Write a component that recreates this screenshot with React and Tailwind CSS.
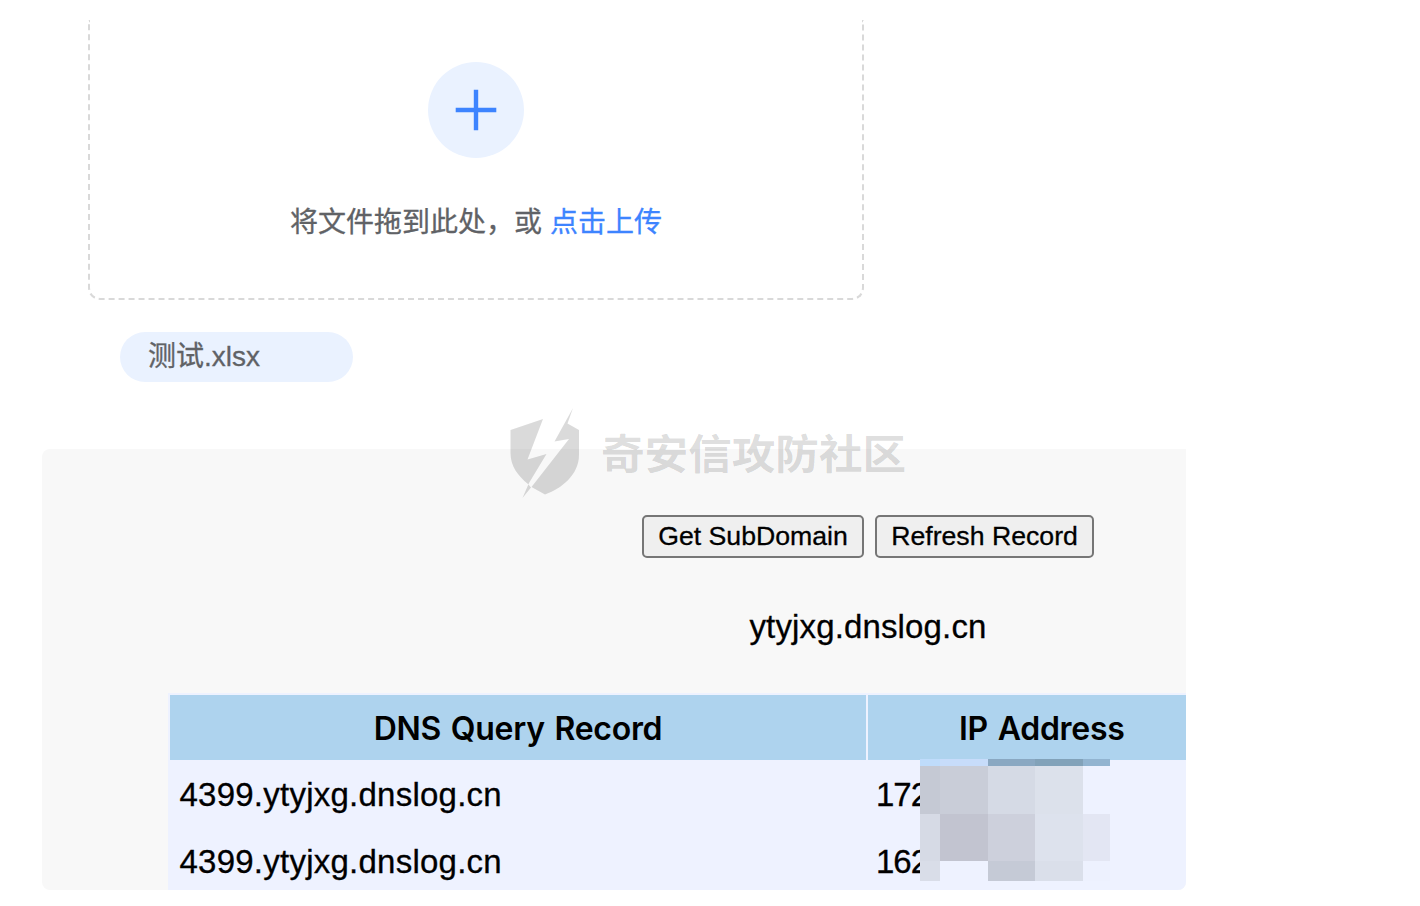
function UploadPanel() {
  return (
    <section className="ml-[88px] flex h-[280px] w-[776px] flex-col items-center rounded-b-xl border-2 border-t-0 border-dashed border-[#d9d9d9] pt-[42px]">
      <div className="flex size-24 shrink-0 items-center justify-center rounded-full bg-[#eaf2ff]">
        <svg viewBox="0 0 42 42" className="size-[42px]" fill="none" stroke="#3d84ff" strokeWidth="4.4">
          <path d="M21 .7v40.6M.7 21h40.6" />
        </svg>
      </div>
      <p className="mt-11 flex gap-2 whitespace-nowrap text-[28px] leading-[42px] text-[#606266] [-webkit-text-stroke:0.3px]">
        <span>将文件拖到此处，或</span>
        <a className="text-[#3d84ff]">点击上传</a>
      </p>
    </section>
  );
}

function Watermark() {
  return (
    <div className="pointer-events-none absolute left-[510px] top-[407px] flex h-[92px] items-center text-black/[0.145]">
      <svg viewBox="0 0 70 92" className="h-[92px] w-[70px]" fill="currentColor">
        <path d="M.5 23 33 12 17.5 52.500 36.500 47 19 76 12.500 91 21 80.500 18 77C8 69 .5 59 .5 46Z" />
        <path d="M63 1 44.500 34.500 59 32 21.500 80 35 87.500C51 82 69 68 69 48V23L57.500 16.500Z" />
      </svg>
      <span className="ml-[21px] scale-y-[0.94] whitespace-nowrap pt-[5px] text-[43.600px] font-bold leading-none">奇安信攻防社区</span>
    </div>
  );
}

function RecordButton({ children, className }) {
  return (
    <button className={`h-[43px] whitespace-nowrap rounded-[5px] border-2 border-[#767676] bg-[#efefef] font-['Liberation_Sans',sans-serif] text-[26.670px] leading-none [-webkit-text-stroke:0.3px] ${className}`}>
      {children}
    </button>
  );
}

function Redaction() {
  return (
    <svg viewBox="0 0 190 122" className="absolute left-[752px] top-[66px] h-[122px] w-[190px]" shapeRendering="crispEdges">
      <path fill="#bfdcfb" d="M0 0h20v7H0z" />
      <path fill="#c7dcfa" d="M20 0h48v7H20z" />
      <path fill="#8aa8c2" d="M68 0h47v7H68z" />
      <path fill="#82a2b9" d="M115 0h48v7h-48z" />
      <path fill="#92b4d0" d="M163 0h27v7h-27z" />
      <path fill="#c5c9d4" d="M0 7h20v48H0z" />
      <path fill="#c9cdd8" d="M20 7h48v48H20z" />
      <path fill="#d5dae5" d="M68 7h47v48H68z" />
      <path fill="#dce1eb" d="M115 7h48v48h-48z" />
      <path fill="#d6dae5" d="M0 55h20v47H0z" />
      <path fill="#c2c4d0" d="M20 55h48v47H20z" />
      <path fill="#cdd0dc" d="M68 55h47v47H68z" />
      <path fill="#dde2ed" d="M115 55h48v47h-48z" />
      <path fill="#e3e6f3" d="M163 55h27v47h-27z" />
      <path fill="#d9dde8" d="M0 102h20v20H0z" />
      <path fill="#c5cad6" d="M68 102h47v20H68z" />
      <path fill="#dadfea" d="M115 102h48v20h-48z" />
      <path fill="#edf1fe" d="M163 102h27v20h-27z" />
    </svg>
  );
}

function DnsTable() {
  const records = ["172", "162"];
  return (
    <div className="relative ml-[126px] mt-[47px] bg-[#eef2ff] pl-0.5 pt-0.5 text-[33px] tracking-[0.24px]">
      <div className="flex h-[65px] gap-0.5 font-['Inter',sans-serif] text-[32px] font-semibold leading-[67px] tracking-[-0.28px] [word-spacing:2px]">
        <div className="w-[696px] shrink-0 bg-[#aed3ee] text-center">DNS Query Record</div>
        <div className="flex-1 bg-[#aed3ee] pl-[91px]">IP Address</div>
      </div>
      {records.map((ip) => (
        <div key={ip} className="flex h-[67px] gap-0.5 leading-[70px] [-webkit-text-stroke:0.3px]">
          <div className="w-[696px] shrink-0 pl-[9.500px]">4399.ytyjxg.dnslog.cn</div>
          <div className="pl-2 tracking-[-1px]">{ip}</div>
        </div>
      ))}
      <Redaction />
    </div>
  );
}

function DnsPanel() {
  return (
    <section className="ml-[42px] mt-[67px] h-[441px] w-[1144px] overflow-hidden rounded-b-lg rounded-tl-lg bg-[#f8f8f8] pt-[66px] text-black">
      <div className="ml-[600px] flex gap-[11px]">
        <RecordButton className="w-[222px]">Get SubDomain</RecordButton>
        <RecordButton className="w-[219px]">Refresh Record</RecordButton>
      </div>
      <p className="ml-[600px] mt-[47px] h-[41px] w-[452px] text-center text-[33px] leading-[43px] tracking-[0.14px] [-webkit-text-stroke:0.3px]">ytyjxg.dnslog.cn</p>
      <DnsTable />
    </section>
  );
}

export default function App() {
  return (
    <main className="relative h-[906px] w-[1420px] overflow-hidden bg-white pt-5 font-['Liberation_Sans','Noto_Sans_CJK_SC',sans-serif]">
      <UploadPanel />
      <div className="ml-[120px] mt-8 flex h-[50px] w-[233px] items-center rounded-full bg-[#eaf2ff] pl-7 text-[28px] leading-none text-[#606266] [-webkit-text-stroke:0.3px]">
        测试.xlsx
      </div>
      <DnsPanel />
      <Watermark />
    </main>
  );
}
